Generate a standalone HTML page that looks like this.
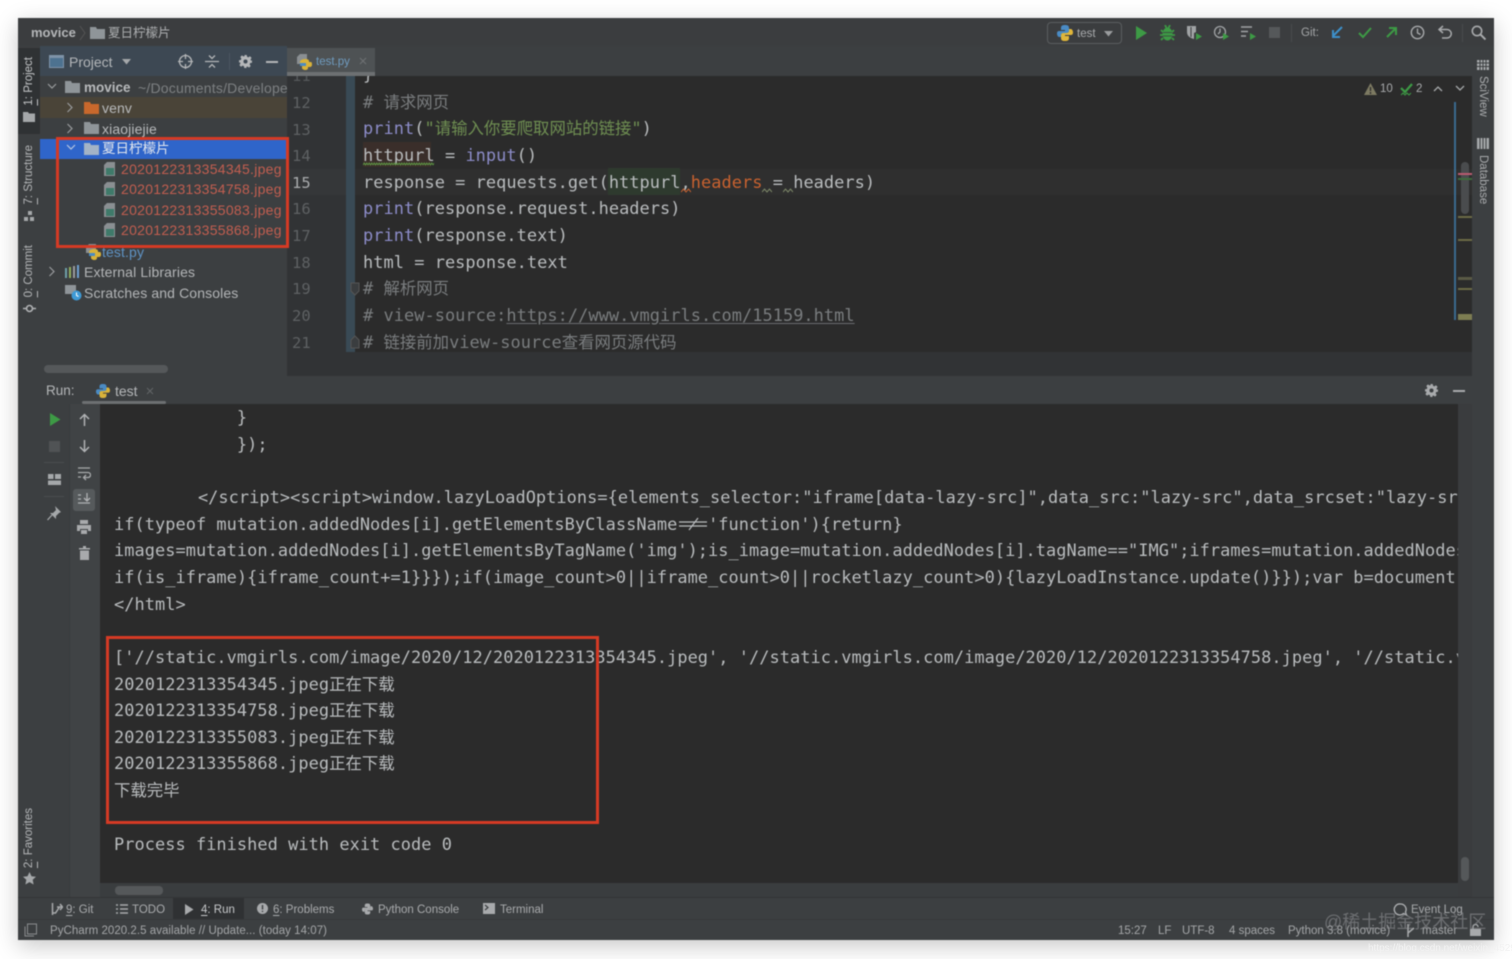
<!DOCTYPE html>
<html><head><meta charset="utf-8"><title>PyCharm</title>
<style>
html,body{margin:0;padding:0;background:#fff}
body{width:1512px;height:959px;overflow:hidden;position:relative;font-family:"Liberation Sans","Noto Sans CJK SC",sans-serif}
#win{position:absolute;left:18px;top:18px;width:1476px;height:922px;background:#3c3f41;box-shadow:0 6px 22px rgba(0,0,0,.22);filter:blur(.45px)}
#root{position:absolute;left:-18px;top:-18px;width:1512px;height:959px;overflow:hidden}
.b,.t,svg.i{position:absolute}
.t{white-space:nowrap;line-height:20px;font-size:13px;color:#bbb}
.tr{font-size:14px;letter-spacing:.12px}
.m{position:absolute;white-space:pre;font-family:"DejaVu Sans Mono","Noto Sans CJK SC",monospace;font-size:16.95px;letter-spacing:.045px;line-height:26px;color:#b9bcbe}
.m i{font-style:normal;font-size:16.4px;letter-spacing:0;line-height:0;font-family:"Noto Sans CJK SC",sans-serif}
.n{position:absolute;left:292px;width:30px;font-family:"DejaVu Sans Mono",monospace;font-size:15.5px;line-height:20px;color:#5e6163}
.v{position:absolute;writing-mode:vertical-rl;transform:rotate(180deg);white-space:nowrap;font-size:11.5px;line-height:14px;color:#b4b6b8}
.p{color:#8c8cc8}.g{color:#6f8f52}.c{color:#7a7d7f}.o{color:#c9622f}
.f{color:#c25e50;font-size:14px;letter-spacing:.28px}
u{text-underline-offset:2px}
.r{position:absolute;box-sizing:border-box;border:3px solid #d63a24}
</style></head><body>
<div id="win"><div id="root">

<!-- title bar -->
<div class="b" style="left:18px;top:18px;width:1476px;height:28px;background:#3b3d3f"></div>
<div class="t" style="left:31px;top:23px;font-weight:bold;color:#b5b7b9">movice</div>
<svg class="i" style="left:79px;top:25px" width="8" height="16"><path d="M1 1l5 7-5 7" fill="none" stroke="#555" /></svg>
<svg class="i" style="left:90px;top:26px" width="16" height="13"><path d="M0 1h6l1 2h8v10H0z" fill="#8f9599"/></svg>
<div class="t" style="left:108px;top:23px;font-size:12.5px;color:#adafb1">夏日柠檬片</div>

<div class="b" style="left:1047px;top:22px;width:75px;height:22px;box-sizing:border-box;border:1px solid #5a5d5f;border-radius:4px"></div>
<svg class="i" style="left:1057px;top:25px" width="16" height="16" viewBox="0 0 16 16"><path d="M8 0C5 0 4 1 4 3v2h4v1H2C0 6 0 8 0 9s1 3 2 3h2v-2c0-1 1-2 3-2h3c1 0 2-1 2-2V3c0-2-1-3-4-3z" fill="#4a8bc4"/><path d="M8 16c3 0 4-1 4-3v-2H8v-1h6c2 0 2-2 2-3s-1-3-2-3h-2v2c0 1-1 2-3 2H6c-1 0-2 1-2 2v3c0 2 1 3 4 3z" fill="#e0b63a"/></svg>
<div class="t" style="left:1077px;top:24px;font-size:11.5px;color:#a9abad">test</div>
<svg class="i" style="left:1104px;top:31px" width="10" height="6"><path d="M0 0h9L4.500 5.500z" fill="#9a9c9e"/></svg>

<svg class="i" style="left:1136px;top:26px" width="12" height="14"><path d="M0 0l11 7-11 7z" fill="#3d9a45"/></svg>
<svg class="i" style="left:1160px;top:25px" width="15" height="16" viewBox="0 0 15 16"><path d="M5 0l1.500 3M10 0L8.500 3M1 5l2 2M14 5l-2 2M0 10h3M15 10h-3M1 15l2-2M14 15l-2-2" stroke="#3d9a45" stroke-width="1.800"/><ellipse cx="7.500" cy="9" rx="5" ry="6.500" fill="#3d9a45"/><path d="M3 7.500h9M3 11h9" stroke="#3b3d3f" stroke-width=".8"/></svg>
<svg class="i" style="left:1186px;top:25px" width="17" height="16" viewBox="0 0 17 16"><path d="M1 1h9v6l-2 1v6C4 13 1 11 1 7z" fill="#a0a3a5"/><path d="M5 2v10" stroke="#3b3d3f"/><path d="M10 8l6 3.500-6 3.500z" fill="#3d9a45"/></svg>
<svg class="i" style="left:1213px;top:25px" width="17" height="16" viewBox="0 0 17 16"><circle cx="7" cy="7" r="5.500" fill="none" stroke="#a0a3a5" stroke-width="1.300"/><path d="M7 3.500V7l-2 2" stroke="#a0a3a5" fill="none" stroke-width="1.300"/><path d="M10 8l6 3.500-6 3.500z" fill="#3d9a45"/></svg>
<svg class="i" style="left:1241px;top:26px" width="16" height="15" viewBox="0 0 16 15"><path d="M0 1h11M0 5.500h7M0 10h5" stroke="#a0a3a5" stroke-width="1.600"/><path d="M9 7l6 3.500-6 3.500z" fill="#3d9a45"/></svg>
<div class="b" style="left:1269px;top:27px;width:11px;height:11px;background:#55585a"></div>
<div class="b" style="left:1291px;top:24px;width:1px;height:18px;background:#484b4d"></div>
<div class="t" style="left:1301px;top:23px;font-size:11.5px;color:#a4a6a8">Git:</div>
<svg class="i" style="left:1331px;top:26px" width="13" height="13"><path d="M11 1L2 10M2 4v7h7" fill="none" stroke="#3d8fc9" stroke-width="2"/></svg>
<svg class="i" style="left:1358px;top:26px" width="14" height="13"><path d="M1 7l4 4 8-9" fill="none" stroke="#3d9a45" stroke-width="2"/></svg>
<svg class="i" style="left:1385px;top:26px" width="13" height="13"><path d="M2 11l9-9M4 2h7v7" fill="none" stroke="#3d9a45" stroke-width="2"/></svg>
<svg class="i" style="left:1410px;top:25px" width="15" height="15"><circle cx="7.500" cy="7.500" r="6.200" fill="none" stroke="#a8aaac" stroke-width="1.400"/><path d="M7.500 3.500v4.500l3 1.500" fill="none" stroke="#a8aaac" stroke-width="1.300"/></svg>
<svg class="i" style="left:1438px;top:25px" width="15" height="15"><path d="M5 1L1 4.500 5 8M1 4.500h8a4 4 0 010 8.500H4" fill="none" stroke="#a8aaac" stroke-width="1.500"/></svg>
<div class="b" style="left:1462px;top:24px;width:1px;height:18px;background:#484b4d"></div>
<svg class="i" style="left:1471px;top:25px" width="15" height="15"><circle cx="6" cy="6" r="4.700" fill="none" stroke="#a8aaac" stroke-width="1.600"/><path d="M9.500 9.500l5 5" stroke="#a8aaac" stroke-width="2"/></svg>

<!-- left stripe -->
<div class="b" style="left:18px;top:46px;width:22px;height:851px;background:#3c3f41"></div>
<div class="b" style="left:18px;top:48px;width:22px;height:86px;background:#2f3234"></div>
<div class="v" style="left:22px;top:57px;color:#c4c6c8"><u>1</u>: Project</div>
<svg class="i" style="left:23px;top:112px" width="12" height="10"><path d="M0 0h5l1 1.500h6V10H0z" fill="#a5a8aa"/></svg>
<div class="v" style="left:22px;top:145px"><u>7</u>: Structure</div>
<svg class="i" style="left:24px;top:211px" width="11" height="11"><path d="M4 0h4v4H4zM0 6h4v4H0zM6 6h4v4H6z" fill="#a5a8aa"/></svg>
<div class="v" style="left:22px;top:245px"><u>0</u>: Commit</div>
<svg class="i" style="left:23px;top:302px" width="13" height="13"><circle cx="6.500" cy="6.500" r="3" fill="none" stroke="#b0b2b4" stroke-width="1.600"/><path d="M0 6.500h3M10 6.500h3" stroke="#b0b2b4" stroke-width="1.600"/></svg>
<div class="v" style="left:22px;top:808px"><u>2</u>: Favorites</div>
<svg class="i" style="left:23px;top:872px" width="13" height="13" viewBox="0 0 13 13"><path d="M6.500 0l2 4.300 4.500.5-3.300 3 .9 4.700-4.100-2.400-4.100 2.400.9-4.700L0 4.800l4.500-.5z" fill="#a5a8aa"/></svg>

<!-- project panel -->
<div class="b" style="left:40px;top:46px;width:247px;height:330px;background:#3c3f41"></div>
<div class="b" style="left:40px;top:46px;width:247px;height:30px;background:#3d4853"></div>
<div class="b" style="left:49px;top:55px;width:15px;height:13px;box-sizing:border-box;border:1px solid #7f93a8;border-top-width:3px;background:#4d7290"></div>
<div class="t" style="left:69px;top:52px;font-size:14px;color:#b3b6b9">Project</div>
<svg class="i" style="left:122px;top:59px" width="10" height="6"><path d="M0 0h9L4.500 5.500z" fill="#a5a8aa"/></svg>
<svg class="i" style="left:178px;top:54px" width="15" height="15"><circle cx="7.500" cy="7.500" r="6" fill="none" stroke="#b4b6b8" stroke-width="1.300"/><path d="M7.500 0v5M7.500 10v5M0 7.500h5M10 7.500h5" stroke="#b4b6b8" stroke-width="1.300"/></svg>
<svg class="i" style="left:205px;top:54px" width="14" height="15"><path d="M0 7.500h14M4 1.500l3 3 3-3M4 13.500l3-3 3 3" fill="none" stroke="#b4b6b8" stroke-width="1.300"/></svg>
<div class="b" style="left:229px;top:53px;width:1px;height:17px;background:#4a5560"></div>
<svg class="i" style="left:239px;top:55px" width="13" height="13" viewBox="0 0 16 16"><path d="M6.500 0h3l.4 2.200 1.700.7 1.900-1.300 2 2-1.300 1.900.7 1.700L16 6.500v3l-2.200.4-.7 1.700 1.300 1.900-2 2-1.900-1.300-1.700.7L9.500 16h-3l-.4-2.200-1.700-.7-1.900 1.300-2-2 1.300-1.900-.7-1.700L0 9.500v-3l2.200-.4.7-1.700-1.300-1.900 2-2 1.900 1.300 1.700-.7zM8 5.500a2.500 2.500 0 100 5 2.500 2.500 0 000-5z" fill="#b4b6b8" fill-rule="evenodd"/></svg>
<div class="b" style="left:266px;top:61px;width:12px;height:2px;background:#b4b6b8"></div>

<!-- tree -->
<svg class="i" style="left:47px;top:83px" width="10" height="8"><path d="M1 1l4 4 4-4" fill="none" stroke="#9a9c9e" stroke-width="1.200"/></svg>
<svg class="i" style="left:65px;top:81px" width="15" height="12"><path d="M0 0h6l1 2h8v10H0z" fill="#8f9599"/></svg>
<div class="t" style="left:84px;top:78px;font-weight:bold;font-size:13.500px;color:#b8babc">movice</div>
<div class="t" style="left:138px;top:78px;color:#7d8082;width:149px;overflow:hidden;font-size:14px;letter-spacing:.2px">~/Documents/Developer</div>
<div class="b" style="left:40px;top:97px;width:247px;height:21px;background:#4a4438"></div>
<svg class="i" style="left:66px;top:102px" width="8" height="11"><path d="M1.500 1l4.500 4.500L1.500 10" fill="none" stroke="#9a9c9e" stroke-width="1.200"/></svg>
<svg class="i" style="left:84px;top:102px" width="15" height="12"><path d="M0 0h6l1 2h8v10H0z" fill="#c8682c"/></svg>
<div class="t tr" style="left:102px;top:98px;color:#b8babc">venv</div>
<svg class="i" style="left:66px;top:123px" width="8" height="11"><path d="M1.500 1l4.500 4.500L1.500 10" fill="none" stroke="#9a9c9e" stroke-width="1.200"/></svg>
<svg class="i" style="left:84px;top:122px" width="15" height="12"><path d="M0 0h6l1 2h8v10H0z" fill="#8f9599"/></svg>
<div class="t tr" style="left:102px;top:119px;color:#b8babc">xiaojiejie</div>
<div class="b" style="left:40px;top:139px;width:247px;height:20px;background:#2f65ca"></div>
<svg class="i" style="left:66px;top:144px" width="10" height="8"><path d="M1 1l4 4 4-4" fill="none" stroke="#b8c6e0" stroke-width="1.200"/></svg>
<svg class="i" style="left:84px;top:143px" width="15" height="12"><path d="M0 0h6l1 2h8v10H0z" fill="#a3b3c6"/></svg>
<div class="t" style="left:102px;top:139px;color:#e4e8ee;font-size:13.500px">夏日柠檬片</div>

<svg class="i" style="left:104px;top:162px" width="12" height="15"><path d="M3 0h8v14H0V3z" fill="#8a8f92"/><path d="M2 6h8v7H2z" fill="#3f7a6a"/></svg>
<div class="t f" style="left:121px;top:159px">2020122313354345.jpeg</div>
<svg class="i" style="left:104px;top:182px" width="12" height="15"><path d="M3 0h8v14H0V3z" fill="#8a8f92"/><path d="M2 6h8v7H2z" fill="#3f7a6a"/></svg>
<div class="t f" style="left:121px;top:179px">2020122313354758.jpeg</div>
<svg class="i" style="left:104px;top:203px" width="12" height="15"><path d="M3 0h8v14H0V3z" fill="#8a8f92"/><path d="M2 6h8v7H2z" fill="#3f7a6a"/></svg>
<div class="t f" style="left:121px;top:200px">2020122313355083.jpeg</div>
<svg class="i" style="left:104px;top:223px" width="12" height="15"><path d="M3 0h8v14H0V3z" fill="#8a8f92"/><path d="M2 6h8v7H2z" fill="#3f7a6a"/></svg>
<div class="t f" style="left:121px;top:220px">2020122313355868.jpeg</div>

<svg class="i" style="left:86px;top:244px" width="15" height="16" viewBox="0 0 15 16"><path d="M3 0h7v9H0V3z" fill="#8a8f92"/><path d="M8 5c3 0 4 1 4 2v1h2c1 0 1 2 1 3s-1 2-2 2h-2v1c0 2-2 2-3 2s-3-1-3-2v-2H3V8c0-2 3-3 5-3z" fill="#d8b23a"/><path d="M3 9h6v3H3z" fill="#4a8bc4"/></svg>
<div class="t tr" style="left:102px;top:242px;color:#5f93c4">test.py</div>
<svg class="i" style="left:48px;top:266px" width="8" height="11"><path d="M1.500 1l4.500 4.500L1.500 10" fill="none" stroke="#9a9c9e" stroke-width="1.200"/></svg>
<svg class="i" style="left:65px;top:265px" width="16" height="13"><path d="M0 3h2v10H0z" fill="#6f9fa8"/><path d="M4 2h2v11H4z" fill="#8fae5e"/><path d="M8 1h2v12H8z" fill="#9a9c9e"/><path d="M12 0h2v13h-2z" fill="#6f9fcf"/></svg>
<div class="t tr" style="left:84px;top:262px;color:#b3b5b7">External Libraries</div>
<svg class="i" style="left:65px;top:285px" width="17" height="16"><path d="M0 0h11v9H0z" fill="#8f9599"/><circle cx="11.500" cy="10.500" r="5" fill="#3f9ad6"/><path d="M11.500 7.500v3l2 1" fill="none" stroke="#fff"/></svg>
<div class="t tr" style="left:84px;top:283px;color:#b3b5b7">Scratches and Consoles</div>
<div class="b" style="left:44px;top:365px;width:124px;height:8px;border-radius:4px;background:#55585a"></div>

<!-- tab strip -->
<div class="b" style="left:287px;top:46px;width:1185px;height:30px;background:#3c3f41"></div>

<!-- editor -->
<div class="b" style="left:287px;top:76px;width:1185px;height:300px;background:#2b2b2b"></div>
<div class="b" style="left:287px;top:76px;width:59px;height:276px;background:#313335"></div>
<div class="b" style="left:346px;top:76px;width:9px;height:276px;background:#394a55"></div>
<div class="b" style="left:287px;top:352px;width:1185px;height:24px;background:#313335"></div>
<div class="b" style="left:355px;top:169px;width:1117px;height:26px;background:#2f2f2f"></div>
<div class="b" style="left:287px;top:169px;width:59px;height:26px;background:#353739"></div>
<div class="b" style="left:608px;top:168px;width:72px;height:27px;background:#2e3a2e"></div>
<div class="b" style="left:363px;top:142px;width:68px;height:25px;background:#3a2e2a"></div>

<div class="n" style="top:66px;color:#55585a">11</div>
<div class="m" style="left:363px;top:61px">}</div>
<div class="n" style="top:93px">12</div>
<div class="n" style="top:120px">13</div>
<div class="n" style="top:146px">14</div>
<div class="n" style="top:173px;color:#a9abad">15</div>
<div class="n" style="top:199px">16</div>
<div class="n" style="top:226px">17</div>
<div class="n" style="top:253px">18</div>
<div class="n" style="top:279px">19</div>
<div class="n" style="top:306px">20</div>
<div class="n" style="top:333px">21</div>

<div class="m" style="left:363px;top:89px"><span class="c"># <i>请求网页</i></span></div>
<div class="m" style="left:363px;top:115px"><span class="p">print</span>(<span class="g">"<i>请输入你要爬取网站的链接</i>"</span>)</div>
<div class="m" style="left:363px;top:142px">httpurl = <span class="p">input</span>()</div>
<svg class="i" style="left:363px;top:162px" width="71" height="4"><defs><pattern id="wg" width="5" height="4" patternUnits="userSpaceOnUse"><path d="M0 3l1.250-2 1.250 2 1.250-2L5 3" fill="none" stroke="#5f9a45" stroke-width=".9"/></pattern></defs><rect width="71" height="4" fill="url(#wg)"/></svg>
<div class="m" style="left:363px;top:169px">response = requests.get(httpurl,<span class="o">headers</span> = headers)</div>
<svg class="i" style="left:681px;top:188px" width="10" height="5"><path d="M0 4l2.500-3L5 4l2.500-3L10 4" fill="none" stroke="#c9622f"/></svg>
<svg class="i" style="left:762px;top:188px" width="10" height="5"><path d="M0 4l2.500-3L5 4l2.500-3L10 4" fill="none" stroke="#7f8a6a"/></svg>
<svg class="i" style="left:783px;top:188px" width="10" height="5"><path d="M0 4l2.500-3L5 4l2.500-3L10 4" fill="none" stroke="#7f8a6a"/></svg>
<div class="m" style="left:363px;top:195px"><span class="p">print</span>(response.request.headers)</div>
<div class="m" style="left:363px;top:222px"><span class="p">print</span>(response.text)</div>
<div class="m" style="left:363px;top:249px">html = response.text</div>
<div class="m" style="left:363px;top:275px"><span class="c"># <i>解析网页</i></span></div>
<div class="m" style="left:363px;top:302px"><span class="c"># view-source:<u style="text-decoration-color:#6a6d6f">https://www.vmgirls.com/15159.html</u></span></div>
<div class="m" style="left:363px;top:329px"><span class="c"># <i>链接前加</i>view-source<i>查看网页源代码</i></span></div>
<svg class="i" style="left:350px;top:282px" width="10" height="14"><path d="M1 1h8v8l-4 4-4-4z" fill="#3a3d3f" stroke="#555"/></svg>
<svg class="i" style="left:350px;top:335px" width="10" height="14"><path d="M1 13h8V5L5 1 1 5z" fill="#3a3d3f" stroke="#555"/></svg>

<!-- tabs over clipped line -->
<div class="b" style="left:287px;top:48px;width:88px;height:28px;background:#4e5254"></div>
<div class="b" style="left:287px;top:72px;width:88px;height:4px;background:#6d7072"></div>
<div class="b" style="left:375px;top:46px;width:1097px;height:29px;background:#3c3f41"></div>
<div class="b" style="left:287px;top:46px;width:88px;height:2px;background:#3c3f41"></div>
<svg class="i" style="left:297px;top:54px" width="15" height="16" viewBox="0 0 15 16"><path d="M3 0h7v10H0V3z" fill="#8a8f92"/><path d="M8 5c3 0 4 1 4 2v1h2c1 0 1 2 1 3s-1 2-2 2h-2v1c0 2-2 2-3 2s-3-1-3-2v-2H3V8c0-2 3-3 5-3z" fill="#d8b23a"/><path d="M3 9h6v3H3z" fill="#4a8bc4"/></svg>
<div class="t" style="left:316px;top:52px;font-size:11.500px;color:#6f9bbf">test.py</div>
<svg class="i" style="left:359px;top:57px" width="8" height="8"><path d="M1 1l6 6M7 1l-6 6" stroke="#6f7274"/></svg>

<!-- inspections -->
<svg class="i" style="left:1364px;top:83px" width="13" height="12"><path d="M6.500 0L13 12H0z" fill="#7d7a62"/><path d="M6.500 4v4M6.500 9v2" stroke="#2b2b2b" stroke-width="1.300"/></svg>
<div class="t" style="left:1380px;top:79px;font-size:11.500px;color:#a9abad">10</div>
<svg class="i" style="left:1400px;top:83px" width="13" height="14"><path d="M1 5l4 4 7-8" fill="none" stroke="#3d9a45" stroke-width="2.200"/><path d="M1 12l2-2 2 2 2-2 2 2 2-2" fill="none" stroke="#3d9a45"/></svg>
<div class="t" style="left:1416px;top:79px;font-size:11.500px;color:#a9abad">2</div>
<svg class="i" style="left:1433px;top:85px" width="10" height="7"><path d="M1 6l4-4 4 4" fill="none" stroke="#a5a8aa" stroke-width="1.300"/></svg>
<svg class="i" style="left:1455px;top:85px" width="10" height="7"><path d="M1 1l4 4 4-4" fill="none" stroke="#a5a8aa" stroke-width="1.300"/></svg>
<div class="b" style="left:1454px;top:102px;width:2px;height:218px;background:#3a6a8f"></div>
<div class="b" style="left:1461px;top:162px;width:8px;height:52px;border-radius:4px;background:#4a4c4e"></div>
<div class="b" style="left:1458px;top:173px;width:14px;height:2px;background:#b85a70"></div>
<div class="b" style="left:1458px;top:178px;width:14px;height:2px;background:#3d6a3d"></div>
<div class="b" style="left:1458px;top:216px;width:14px;height:2px;background:#6b6a45"></div>
<div class="b" style="left:1458px;top:239px;width:14px;height:2px;background:#6b6a45"></div>
<div class="b" style="left:1458px;top:277px;width:14px;height:3px;background:#5a5a45"></div>
<div class="b" style="left:1458px;top:288px;width:14px;height:2px;background:#6b6a45"></div>
<div class="b" style="left:1458px;top:314px;width:14px;height:6px;background:#7d7d52"></div>

<!-- right stripe -->
<div class="b" style="left:1472px;top:46px;width:22px;height:851px;background:#3c3f41"></div>
<svg class="i" style="left:1477px;top:60px" width="12" height="10"><path d="M0 0h12v10H0z" fill="#a5a8aa"/><path d="M0 3h12M0 6.500h12M3 0v10M6 0v10M9 0v10" stroke="#3c3f41"/></svg>
<div class="v" style="left:1476px;top:76px;transform:none;color:#a9abad">SciView</div>
<svg class="i" style="left:1477px;top:137px" width="12" height="13"><path d="M0 1h12v11H0z" fill="#a5a8aa"/><path d="M3 1v11M6 1v11M9 1v11" stroke="#3c3f41"/></svg>
<div class="v" style="left:1476px;top:155px;transform:none;color:#a9abad">Database</div>

<!-- run header -->
<div class="b" style="left:40px;top:376px;width:1432px;height:28px;background:#3c3f41"></div>
<div class="t" style="left:46px;top:381px;font-size:13.500px;color:#b5b7b9">Run:</div>
<svg class="i" style="left:96px;top:384px" width="14" height="14" viewBox="0 0 16 16"><path d="M8 0C5 0 4 1 4 3v2h4v1H2C0 6 0 8 0 9s1 3 2 3h2v-2c0-1 1-2 3-2h3c1 0 2-1 2-2V3c0-2-1-3-4-3z" fill="#4a8bc4"/><path d="M8 16c3 0 4-1 4-3v-2H8v-1h6c2 0 2-2 2-3s-1-3-2-3h-2v2c0 1-1 2-3 2H6c-1 0-2 1-2 2v3c0 2 1 3 4 3z" fill="#d8b23a"/></svg>
<div class="t" style="left:115px;top:381px;font-size:14px;color:#b5b7b9">test</div>
<svg class="i" style="left:146px;top:387px" width="8" height="8"><path d="M1 1l6 6M7 1l-6 6" stroke="#626567"/></svg>
<div class="b" style="left:82px;top:401px;width:84px;height:3px;background:#6d7072;border-radius:2px"></div>
<svg class="i" style="left:1425px;top:384px" width="13" height="13" viewBox="0 0 16 16"><path d="M6.500 0h3l.4 2.200 1.700.7 1.900-1.300 2 2-1.300 1.900.7 1.700L16 6.500v3l-2.200.4-.7 1.700 1.300 1.900-2 2-1.900-1.300-1.700.7L9.500 16h-3l-.4-2.200-1.700-.7-1.900 1.300-2-2 1.300-1.900-.7-1.700L0 9.500v-3l2.200-.4.7-1.700-1.300-1.900 2-2 1.900 1.300 1.700-.7zM8 5.500a2.500 2.500 0 100 5 2.500 2.500 0 000-5z" fill="#a8aaac" fill-rule="evenodd"/></svg>
<div class="b" style="left:1453px;top:390px;width:12px;height:2px;background:#a8aaac"></div>

<!-- run toolbars -->
<div class="b" style="left:40px;top:404px;width:30px;height:493px;background:#3c3f41"></div>
<div class="b" style="left:69px;top:404px;width:1px;height:493px;background:#383b3d"></div>
<div class="b" style="left:70px;top:404px;width:30px;height:493px;background:#404345"></div>
<svg class="i" style="left:50px;top:413px" width="11" height="13"><path d="M0 0l10.500 6.500L0 13z" fill="#3d9a45"/></svg>
<div class="b" style="left:49px;top:441px;width:11px;height:11px;background:#505355"></div>
<div class="b" style="left:44px;top:462px;width:20px;height:1px;background:#4a4d4f"></div>
<svg class="i" style="left:48px;top:474px" width="13" height="12"><path d="M0 0h5.500v5H0zM7 0h6v5H7zM0 6.500h13V11H0z" fill="#a5a8aa"/></svg>
<div class="b" style="left:44px;top:496px;width:20px;height:1px;background:#4a4d4f"></div>
<svg class="i" style="left:47px;top:506px" width="14" height="15"><path d="M8 0l6 6-2 1-3 3 0 3-6-6 3 0 3-3z" fill="#a5a8aa"/><path d="M5 9l-4.500 5" stroke="#a5a8aa" stroke-width="1.300"/></svg>
<svg class="i" style="left:79px;top:413px" width="11" height="13"><path d="M5.500 13V1.500M1 6l4.500-4.500L10 6" fill="none" stroke="#b0b2b4" stroke-width="1.500"/></svg>
<svg class="i" style="left:79px;top:440px" width="11" height="13"><path d="M5.500 0v11.500M1 7l4.500 4.500L10 7" fill="none" stroke="#b0b2b4" stroke-width="1.500"/></svg>
<svg class="i" style="left:77px;top:467px" width="14" height="14"><path d="M1 1h12M1 5.500h10a2.500 2.500 0 010 5H7M9 8l-2.500 2.500L9 13M1 10h3" fill="none" stroke="#a8aaac" stroke-width="1.300"/></svg>
<div class="b" style="left:73px;top:489px;width:22px;height:22px;border-radius:3px;background:#565a5c"></div>
<svg class="i" style="left:77px;top:493px" width="14" height="14"><path d="M10 0v8M7 5l3 3 3-3" fill="none" stroke="#b0b2b4" stroke-width="1.300"/><path d="M1 2h3M1 6h3M1 10h12" stroke="#b0b2b4" stroke-width="1.300"/></svg>
<svg class="i" style="left:77px;top:520px" width="14" height="14"><path d="M3 0h8v4H3zM0 5h14v6h-3V9H3v2H0zM4 10h6v4H4z" fill="#a8aaac"/></svg>
<svg class="i" style="left:79px;top:546px" width="11" height="14"><path d="M0 2h11v1.500H0zM4 0h3v2H4zM1 4.500h9V14H1z" fill="#a8aaac"/></svg>

<!-- console -->
<div class="b" style="left:100px;top:404px;width:1358px;height:479px;background:#2b2b2b"></div>
<div class="b" style="left:1458px;top:404px;width:14px;height:493px;background:#3a3c3e"></div>
<div class="b" style="left:100px;top:883px;width:1358px;height:14px;background:#3a3d3f"></div>
<div class="b" style="left:115px;top:886px;width:48px;height:9px;border-radius:4px;background:#55585a"></div>
<div class="b" style="left:1461px;top:857px;width:8px;height:24px;border-radius:4px;background:#55585a"></div>
<div id="con" style="position:absolute;left:0;top:0;width:1458px;height:883px;overflow:hidden">
<div class="m" style="left:114px;top:404px">            }</div>
<div class="m" style="left:114px;top:431px">            });</div>
<div class="m" style="left:116px;top:484px">        &lt;/script&gt;&lt;script&gt;window.lazyLoadOptions={elements_selector:"iframe[data-lazy-src]",data_src:"lazy-src",data_srcset:"lazy-srcset"</div>
<div class="m" style="left:114px;top:511px">if(typeof mutation.addedNodes[i].getElementsByClassName<span style="color:transparent">!==</span>'function'){return}</div>
<svg class="i" style="left:678px;top:516px" width="31" height="16"><path d="M1 6h28M1 10h28M20 2L11 14" fill="none" stroke="#b9bcbe" stroke-width="1.200"/></svg>
<div class="m" style="left:114px;top:537px">images=mutation.addedNodes[i].getElementsByTagName('img');is_image=mutation.addedNodes[i].tagName=="IMG";iframes=mutation.addedNodes[i].get</div>
<div class="m" style="left:114px;top:564px">if(is_iframe){iframe_count+=1}}});if(image_count&gt;0||iframe_count&gt;0||rocketlazy_count&gt;0){lazyLoadInstance.update()}});var b=document</div>
<div class="m" style="left:114px;top:591px">&lt;/html&gt;</div>
<div class="m" style="left:114px;top:644px">['//static.vmgirls.com/image/2020/12/2020122313354345.jpeg', '//static.vmgirls.com/image/2020/12/2020122313354758.jpeg', '//static.vmgirls.com</div>
<div class="m" style="left:114px;top:671px">2020122313354345.jpeg<i>正在下载</i></div>
<div class="m" style="left:114px;top:697px">2020122313354758.jpeg<i>正在下载</i></div>
<div class="m" style="left:114px;top:724px">2020122313355083.jpeg<i>正在下载</i></div>
<div class="m" style="left:114px;top:750px">2020122313355868.jpeg<i>正在下载</i></div>
<div class="m" style="left:114px;top:777px"><i>下载完毕</i></div>
<div class="m" style="left:114px;top:831px">Process finished with exit code 0</div>
</div>

<!-- bottom tool bar -->
<div class="b" style="left:18px;top:897px;width:1476px;height:1px;background:#333537"></div>
<div class="b" style="left:18px;top:898px;width:1476px;height:22px;background:#3c3f41"></div>
<div class="b" style="left:18px;top:919px;width:1476px;height:21px;background:#3c3f41"></div>
<div class="b" style="left:173px;top:898px;width:71px;height:21px;background:#2f3133"></div>
<svg class="i" style="left:51px;top:903px" width="12" height="13"><path d="M1.500 0v12M1.500 10h3l4-6M6 4h5M9 1l2.500 3L9 7" fill="none" stroke="#a8aaac" stroke-width="1.500"/></svg>
<div class="t" style="left:66px;top:900px;font-size:11.500px;color:#a9abad"><u>9</u>: Git</div>
<svg class="i" style="left:116px;top:904px" width="12" height="10"><path d="M0 1h2M4 1h8M0 5h2M4 5h8M0 9h2M4 9h8" stroke="#a8aaac" stroke-width="1.500"/></svg>
<div class="t" style="left:132px;top:900px;font-size:11.500px;color:#a9abad">TODO</div>
<svg class="i" style="left:185px;top:904px" width="9" height="11"><path d="M0 0l8.500 5.500L0 11z" fill="#a8aaac"/></svg>
<div class="t" style="left:201px;top:900px;font-size:11.500px;color:#c8cacc"><u>4</u>: Run</div>
<svg class="i" style="left:257px;top:903px" width="11" height="11"><circle cx="5.500" cy="5.500" r="5.500" fill="#a8aaac"/><path d="M5.500 2v4.500M5.500 7.700v1.300" stroke="#3c3f41" stroke-width="1.400"/></svg>
<div class="t" style="left:273px;top:900px;font-size:11.500px;color:#a9abad"><u>6</u>: Problems</div>
<svg class="i" style="left:362px;top:903px" width="11" height="12" viewBox="0 0 16 16"><path d="M8 0C5 0 4 1 4 3v2h4v1H2C0 6 0 8 0 9s1 3 2 3h2v-2c0-1 1-2 3-2h3c1 0 2-1 2-2V3c0-2-1-3-4-3z" fill="#a8aaac"/><path d="M8 16c3 0 4-1 4-3v-2H8v-1h6c2 0 2-2 2-3s-1-3-2-3h-2v2c0 1-1 2-3 2H6c-1 0-2 1-2 2v3c0 2 1 3 4 3z" fill="#a8aaac"/></svg>
<div class="t" style="left:378px;top:900px;font-size:11.500px;color:#a9abad">Python Console</div>
<svg class="i" style="left:483px;top:903px" width="12" height="11"><path d="M0 0h12v11H0z" fill="#a8aaac"/><path d="M2 2l3 2.500L2 7" fill="none" stroke="#3c3f41" stroke-width="1.200"/></svg>
<div class="t" style="left:500px;top:900px;font-size:11.500px;color:#a9abad">Terminal</div>
<svg class="i" style="left:1393px;top:903px" width="15" height="14"><path d="M7.500 1a5.500 5.500 0 015 8l1 3-3-1.500A5.500 5.500 0 117.500 1z" fill="none" stroke="#b0b2b4" stroke-width="1.300"/></svg>
<div class="t" style="left:1411px;top:900px;font-size:11.500px;color:#a9abad">Event Log</div>

<!-- status bar -->
<div class="b" style="left:18px;top:919px;width:1476px;height:1px;background:#37393b"></div>
<svg class="i" style="left:24px;top:923px" width="14" height="14"><path d="M3.500 1h9v10h-9z" fill="none" stroke="#8a8c8e"/><path d="M1 3.500V13h9" fill="none" stroke="#8a8c8e"/></svg>
<div class="t" style="left:50px;top:921px;font-size:11.500px;letter-spacing:.04px;color:#a4a6a8">PyCharm 2020.2.5 available // Update... (today 14:07)</div>
<div class="t" style="left:1118px;top:921px;font-size:11.500px;color:#a4a6a8">15:27</div>
<div class="t" style="left:1158px;top:921px;font-size:11.500px;color:#a4a6a8">LF</div>
<div class="t" style="left:1182px;top:921px;font-size:11.500px;color:#a4a6a8">UTF-8</div>
<div class="t" style="left:1229px;top:921px;font-size:11.500px;color:#a4a6a8">4 spaces</div>
<div class="t" style="left:1288px;top:921px;font-size:11.500px;color:#a4a6a8">Python 3.8 (movice)</div>
<svg class="i" style="left:1406px;top:924px" width="11" height="13"><path d="M2 0v13M2 9l6-5" fill="none" stroke="#a8aaac" stroke-width="1.500"/></svg>
<div class="t" style="left:1422px;top:921px;font-size:11.500px;color:#a4a6a8">master</div>
<svg class="i" style="left:1470px;top:924px" width="11" height="12"><path d="M0 5h11v7H0z" fill="#a8aaac"/><path d="M3 5V3a2.500 2.500 0 015 0" fill="none" stroke="#a8aaac" stroke-width="1.300"/></svg>
<div class="t" style="left:1324px;top:910px;font-size:18px;line-height:24px;color:rgba(150,152,154,.55)">@稀土掘金技术社区</div>

<!-- red annotation boxes -->
<div class="r" style="left:56px;top:137px;width:233px;height:111px"></div>
<div class="r" style="left:106px;top:636px;width:493px;height:188px"></div>

</div></div>
<div class="t" style="left:1368px;top:942px;font-size:10px;line-height:14px;color:#f2f2f2">https://blog.csdn.net/weixin_45297</div>
</body></html>
